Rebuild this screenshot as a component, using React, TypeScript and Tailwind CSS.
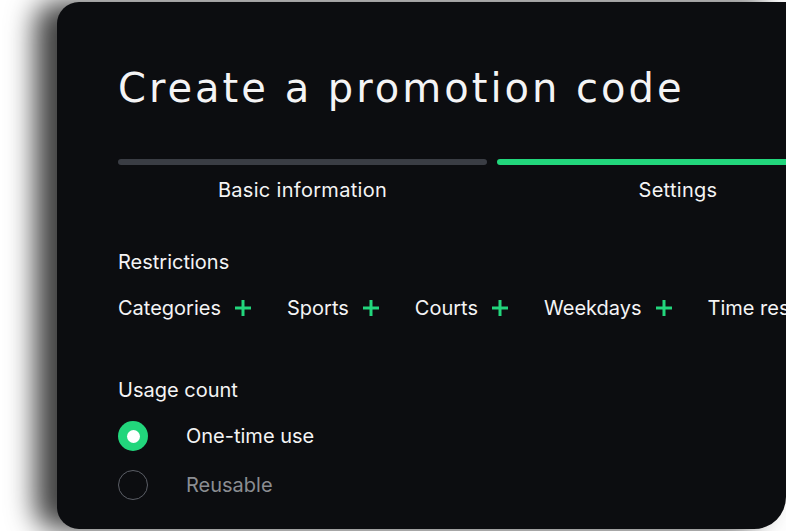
function Plus() {
  return (
    <svg width="18" height="18" viewBox="0 0 18 18" className="shrink-0">
      <path d="M9 1v16M1 9h16" stroke="#22d67c" strokeWidth="3" />
    </svg>
  )
}

const restrictions = ['Categories', 'Sports', 'Courts', 'Weekdays', 'Time restrictions']

export default function App() {
  return (
    <div
      className="w-[786px] h-[531px] overflow-hidden bg-white"
      style={{ fontFamily: 'Inter, "Noto Sans", sans-serif' }}
    >
      <div className="ml-[57px] mt-[2px] w-[729px] h-[527px] rounded-[22px] rounded-tr-none rounded-br-[32px] bg-[#0c0d10] overflow-hidden shadow-[-22px_0_28px_rgba(0,0,0,0.75)]">
        <div className="pl-[61px] pt-[62px] w-[820px] text-[#f4f4f5]">
          <h1
            className="text-[40px] leading-[48px] tracking-[3px]"
            style={{ fontFamily: '"DejaVu Sans", sans-serif' }}
          >
            Create a promotion code
          </h1>

          {/* steps */}
          <div className="mt-[47px] flex gap-[10px]">
            <div className="w-[369px] flex flex-col items-center">
              <div className="h-[6px] w-full rounded-full bg-[#3a3d44]" />
              <div className="mt-[11px] text-[20px] leading-[28px] tracking-[0.3px]">Basic information</div>
            </div>
            <div className="w-[362px] flex flex-col items-center">
              <div className="h-[6px] w-full rounded-full bg-[#22d67c]" />
              <div className="mt-[11px] text-[20px] leading-[28px] tracking-[0.3px]">Settings</div>
            </div>
          </div>

          <div className="mt-[44px] text-[20px] leading-[28px]">Restrictions</div>
          <div className="mt-[18px] flex items-center gap-[35px] whitespace-nowrap">
            {restrictions.map((r) => (
              <div key={r} className="flex items-center gap-[13px] text-[20px] leading-[28px]">
                <span>{r}</span>
                {r !== 'Time restrictions' && <Plus />}
              </div>
            ))}
          </div>

          <div className="mt-[54px] text-[20px] leading-[28px]">Usage count</div>
          <div className="mt-[17px] flex items-center gap-[38px]">
            <div className="w-[30px] h-[30px] rounded-full bg-[#22d67c] flex items-center justify-center">
              <div className="w-[13px] h-[13px] rounded-full bg-white" />
            </div>
            <span className="text-[20px] leading-[28px]">One-time use</span>
          </div>
          <div className="mt-[19px] flex items-center gap-[38px]">
            <div className="w-[30px] h-[30px] rounded-full border-[1.5px] border-[#5b5e66]" />
            <span className="text-[20px] leading-[28px] text-[#8b8d92]">Reusable</span>
          </div>
        </div>
      </div>
    </div>
  )
}
